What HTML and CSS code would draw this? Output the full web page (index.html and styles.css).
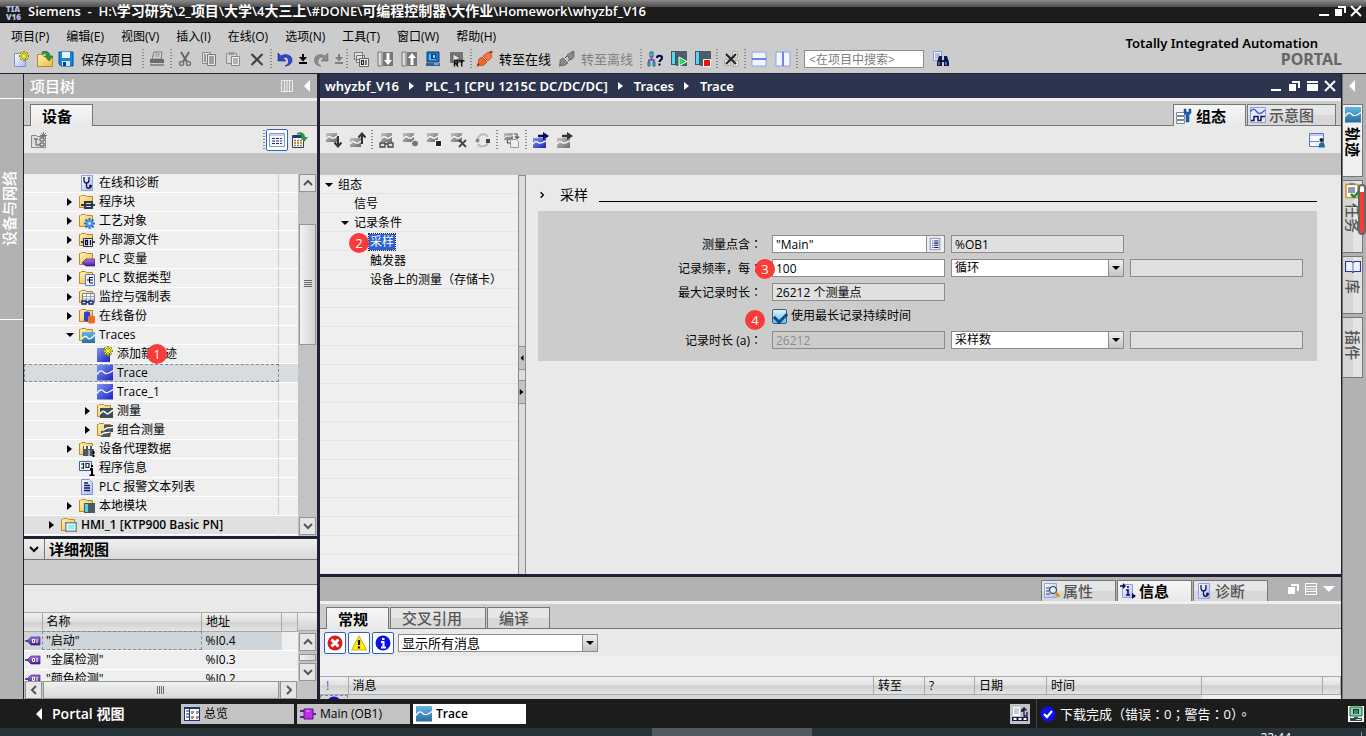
FILE: index.html
```html
<!DOCTYPE html>
<html lang="zh-CN">
<head>
<meta charset="utf-8">
<meta name="viewport" content="width=device-width, initial-scale=1">
<title>Siemens - whyzbf_V16</title>
<link rel="stylesheet" href="styles.css">
</head>
<body>
<svg class="sprite" aria-hidden="true">
  <defs>
    <linearGradient id="gFold" x1="0" y1="0" x2="1" y2="1"><stop offset="0" stop-color="#fff3b8"/><stop offset="1" stop-color="#f0b93c"/></linearGradient>
    <linearGradient id="gBlue" x1="0" y1="0" x2="1" y2="1"><stop offset="0" stop-color="#7f97f5"/><stop offset="1" stop-color="#1c22b8"/></linearGradient>
    <linearGradient id="gSky" x1="0" y1="0" x2="0" y2="1"><stop offset="0" stop-color="#63b6e6"/><stop offset="1" stop-color="#2b6c9c"/></linearGradient>
    <linearGradient id="gDoc" x1="0" y1="0" x2="1" y2="1"><stop offset="0" stop-color="#ffffff"/><stop offset="1" stop-color="#a9b8ee"/></linearGradient>
    <linearGradient id="gGray" x1="0" y1="0" x2="1" y2="1"><stop offset="0" stop-color="#c4c4c4"/><stop offset="1" stop-color="#6c6c6c"/></linearGradient>
    <linearGradient id="gPur" x1="0" y1="0" x2="0" y2="1"><stop offset="0" stop-color="#a47be8"/><stop offset="1" stop-color="#4a1a9c"/></linearGradient>
  </defs>
  <symbol id="folder" viewBox="0 0 16 16"><path d="M.5 13.500V2.500h1l1-1h4l1 1h6v11z" fill="url(#gFold)" stroke="#b98a28"/></symbol>
  <symbol id="star" viewBox="0 0 16 16"><path d="M11 0v10M6 5h10M7.500 1.500l7 7M14.500 1.500l-7 7" stroke="#8b8a00" stroke-width="2"/><path d="M11 1v8M7 5h8M8 2l6 6M14 2l-6 6" stroke="#ffff3c" stroke-width="1"/></symbol>
  <symbol id="new" viewBox="0 0 16 16"><path d="M1.500 2.500h11v13h-11z" fill="url(#gDoc)" stroke="#7d93d8"/><use href="#star"/></symbol>
  <symbol id="open" viewBox="0 0 16 16"><path d="M.5 15.500v-12h5l1 2h9v10z" fill="url(#gFold)" stroke="#b98a28"/><path d="M5 1c5-2 8 1 8 4h3l-4 5-4-5h2c0-2-2-3-5-2z" fill="#2a9a38" stroke="#10661e" stroke-width=".6"/></symbol>
  <symbol id="save" viewBox="0 0 16 16"><path d="M1 1h14v14H3l-2-2z" fill="#1685dc" stroke="#0a4f98"/><path d="M4 1h8v6H4z" fill="#e9f3fb"/><path d="M4 10h8v5H4z" fill="#cfe3f4"/><path d="M5 11h3v4H5z" fill="#0a3e7c"/></symbol>
  <symbol id="print" viewBox="0 0 16 16"><path d="M5 1h8l-1 7H3z" fill="#d9d9d9" stroke="#777"/><path d="M6 3h5M5.500 5h5" stroke="#888"/><path d="M1 8h14v4H1z" fill="#6b6b6b"/><path d="M1 13h14v2H1z" fill="#8f8f8f"/></symbol>
  <symbol id="cut" viewBox="0 0 16 16"><path d="M4 1l6 10M12 1L6 11" stroke="#666" stroke-width="2" fill="none"/><circle cx="4.500" cy="12.500" r="2" fill="none" stroke="#777" stroke-width="1.500"/><circle cx="11.500" cy="12.500" r="2" fill="none" stroke="#777" stroke-width="1.500"/></symbol>
  <symbol id="copy" viewBox="0 0 16 16"><path d="M1.500 1.500h8v11h-8z" fill="#ddd" stroke="#8a8a8a"/><path d="M6.500 3.500h8v11h-8z" fill="#e8e8e8" stroke="#777"/><path d="M8 6h5M8 8h5M8 10h5M8 12h5M3 4h2M3 6h2M3 8h2M3 10h2" stroke="#555"/></symbol>
  <symbol id="paste" viewBox="0 0 16 16"><path d="M1.500 2.500h10v10h-10z" fill="#d6d6d6" stroke="#8e8e8e"/><path d="M4 1h5v3H4z" fill="#999"/><path d="M6.500 5.500h8v9h-8z" fill="#eee" stroke="#888"/><path d="M8 8h5M8 10h5M8 12h5" stroke="#777"/></symbol>
  <symbol id="del" viewBox="0 0 16 16"><path d="M2.500 3l11 11M13.500 3l-11 11" stroke="#3d3d3d" stroke-width="2"/></symbol>
  <symbol id="undo" viewBox="0 0 16 16"><path d="M1 2v8h8L6 7c3-2 7 0 5 6l-3 2c7 0 9-7 5-10-3-2-6-2-9 0z" fill="#2c49d6" stroke="#16237e" stroke-width=".6"/></symbol>
  <symbol id="redo" viewBox="0 0 16 16"><path d="M15 2v8H8l3-3c-3-2-7 0-6 6l3 2C1 15 0 8 3 5c3-2 6-2 9 0z" fill="#8a8a8a" stroke="#707070" stroke-width=".6"/></symbol>
  <symbol id="drop" viewBox="0 0 8 16"><path d="M3 3h2v3h3L4 10.500 0 6h3zM0 11h8v2H0z" fill="currentColor"/></symbol>
  <symbol id="compile" viewBox="0 0 16 16"><path d="M1.500 1.500h8v7h-8zM3.500 4.500h8v7h-8z" fill="#e4e4e4" stroke="#777"/><path d="M6.500 7.500h9v8h-9z" fill="#f3f3f3" stroke="#666"/><path d="M8.500 9.500h2v4h-2zM13 9v5" fill="none" stroke="#222" stroke-width="1.200"/></symbol>
  <symbol id="down" viewBox="0 0 16 16"><path d="M1 1h4v14H1z" fill="#dadada" stroke="#777"/><path d="M6 1h10v14H6z" fill="#777"/><path d="M9.500 2h3v7H15l-4 5-4-5h2.500z" fill="#fff"/></symbol>
  <symbol id="up" viewBox="0 0 16 16"><path d="M1 1h4v14H1z" fill="#dadada" stroke="#777"/><path d="M6 1h10v14H6z" fill="#777"/><path d="M9.500 14h3V7H15l-4-5-4 5h2.500z" fill="#fff"/></symbol>
  <symbol id="pc" viewBox="0 0 16 16"><path d="M2 1h12v10H2z" fill="#1b74c4" stroke="#12386a"/><path d="M4 3h7v6H4z" fill="#46c0f0"/><path d="M6 3h5v5H6z" fill="#0e3b7a"/><path d="M8 4h2v3H8z" fill="#7ce0ff"/><path d="M1 12h14v3H1z" fill="#3a5d90"/><path d="M9 13h5" stroke="#bfe0ff"/></symbol>
  <symbol id="rt" viewBox="0 0 16 16"><path d="M1 1h13v11H1z" fill="#747474"/><path d="M4 3l7 4-7 4z" fill="#ddd" stroke="#444" stroke-width=".6"/><path d="M5.500 15.500v-6h3v3h-3M7 12.500l2 3M10 9.700h5.500M12.700 10v5.500" stroke="#111" stroke-width="1.400" fill="none"/></symbol>
  <symbol id="plug" viewBox="0 0 16 16"><path d="M0 15l3-3M12 3l3-3" stroke="#b33510" stroke-width="2.500"/><path d="M2 8l3-2 5 5-3 3c-2 1-4 1-5-1s-1-4 0-5z" fill="#f0682c" stroke="#b83a10" stroke-width=".7"/><path d="M6 5l4-3c2-1 4 0 4 1 1 2 1 4-1 5l-2 2z" fill="#f47b3c" stroke="#b83a10" stroke-width=".7"/></symbol>
  <symbol id="plugoff" viewBox="0 0 16 16"><path d="M0 15l3-3M12 3l3-3" stroke="#777" stroke-width="2.500"/><path d="M1 9l3-2 5 5-3 2c-2 1-4 1-5-1zM8 4l3-2c2-1 4 0 4 1 0 3 0 4-2 5l-2 1z" fill="#8b8b8b" stroke="#555" stroke-width=".7"/><path d="M6 7l2-2M9 10l2-2" stroke="#444"/></symbol>
  <symbol id="diag" viewBox="0 0 16 16"><path d="M3 1h3v5H3zM1 11h2v4H1zM6 11h2v4H6z" stroke="#1d6d80" fill="#40c8d8"/><path d="M4.500 6v3M2 11V9h5v2" fill="none" stroke="#8c2fb4" stroke-width="1.500"/><path d="M10 7c0-3 5-3 5 0 0 2-2.500 2-2.500 4M12.500 12.500v2" fill="none" stroke="#000040" stroke-width="2"/></symbol>
  <symbol id="start" viewBox="0 0 16 16"><path d="M0 0h5v14H0z" fill="#35576c"/><path d="M1 1h3v12H1z" fill="#56d8e8"/><path d="M5 0h11v15H5z" fill="#4c5c6a"/><path d="M8 6l8 4.500L8 15z" fill="#25d860" stroke="#fff" stroke-width="1"/></symbol>
  <symbol id="stop" viewBox="0 0 16 16"><path d="M0 0h5v14H0z" fill="#35576c"/><path d="M1 1h3v12H1z" fill="#56d8e8"/><path d="M5 0h11v15H5z" fill="#4c5c6a"/><path d="M8.500 8.500h7v7h-7z" fill="#f01010" stroke="#fff"/></symbol>
  <symbol id="xref" viewBox="0 0 16 16"><path d="M9.500.5h5v6h-5zM1.500 8.500h6v6h-6zM10.500 9.500h5v6h-5z" fill="#e8e8e8" stroke="#aaa"/><path d="M3 3l10 10M13 3L3 13" stroke="#222" stroke-width="2"/></symbol>
  <symbol id="splith" viewBox="0 0 16 16"><path d="M1 1h14v14H1z" fill="#f2f4ff" stroke="#8ba0ee"/><path d="M1 8h14" stroke="#4462d8" stroke-width="1.500"/></symbol>
  <symbol id="splitv" viewBox="0 0 16 16"><path d="M1 1h14v14H1z" fill="#f2f4ff" stroke="#8ba0ee"/><path d="M8 1v14" stroke="#4462d8" stroke-width="1.500"/></symbol>
  <symbol id="find" viewBox="0 0 16 16"><path d="M.5.5h8v9h-8z" fill="#eef" stroke="#8c9ad8"/><path d="M2 3h5M2 5h5M2 7h5" stroke="#7c8ccc"/><path d="M6 5h3v4h2V5h3l2 6v4h-5v-4h-2v4H4v-4z" fill="#101850"/><path d="M6 11v3M13 11v3" stroke="#9db4ff"/></symbol>
  <symbol id="wave" viewBox="0 0 16 16"><path d="M0 0h16v15.500H0z" fill="url(#gBlue)"/><path d="M0 9.500c3-5 5-4 7-2s4 2 9-2" fill="none" stroke="#fff" stroke-width="1.300"/></symbol>
  <symbol id="skywave" viewBox="0 0 16 16"><path d="M0 0h16v15.500H0z" fill="url(#gSky)"/><path d="M0 9.500c3-5 5-4 7-2s4 2 9-2" fill="none" stroke="#fff" stroke-width="1.300"/></symbol>
  <symbol id="addtrace" viewBox="0 0 16 16"><path d="M0 2h13v14H0z" fill="url(#gBlue)"/><use href="#star"/></symbol>
  <symbol id="diagdoc" viewBox="0 0 16 16"><path d="M2.500.5h11v15h-11z" fill="url(#gDoc)" stroke="#8fa3e0"/><path d="M5 2v3c0 4 5 4 5 0V2M7.500 8v3c0 3 4 3 4 0" fill="none" stroke="#0d1450" stroke-width="1.300"/><circle cx="11.500" cy="11" r="1.500" fill="#0d1450"/></symbol>
  <symbol id="fblock" viewBox="0 0 16 16"><use href="#folder"/><path d="M2 11h14M6 8h7v6H6z" stroke="#2d3944" stroke-width="2" fill="#cfd6dc"/></symbol>
  <symbol id="fgear" viewBox="0 0 16 16"><use href="#folder"/><path d="M10.500 5v11M5 10.500h11M6.500 6.500l8 8M14.500 6.500l-8 8" stroke="#1f6fe0" stroke-width="2"/><circle cx="10.500" cy="10.500" r="3" fill="#4d9bff"/><circle cx="10.500" cy="10.500" r="1.200" fill="#fff"/></symbol>
  <symbol id="fsrc" viewBox="0 0 16 16"><use href="#folder"/><path d="M2 10h14" stroke="#444" stroke-width="2"/><path d="M4.500 6.500h9v8h-9z" fill="#eef" stroke="#334"/><path d="M6.500 8.500h2v4h-2zM11.500 8v5" fill="none" stroke="#003" stroke-width="1.300"/></symbol>
  <symbol id="ftag" viewBox="0 0 16 16"><use href="#folder"/><path d="M3 12l4-4h9v7H7z" fill="url(#gPur)" stroke="#2f0f6c" stroke-width=".6"/></symbol>
  <symbol id="ftype" viewBox="0 0 16 16"><use href="#folder"/><path d="M6.500 4.500h9v11h-9z" fill="#eef2ff" stroke="#5f79c0"/><path d="M8 10h2M10.500 7v6M11 7.500h3M11 10h3M11 13h3" stroke="#112" fill="none"/></symbol>
  <symbol id="fwatch" viewBox="0 0 16 16"><use href="#folder"/><path d="M3.500 4.500h12v9h-12z" fill="#fff" stroke="#7080a8"/><path d="M4 7.500h11M4 10h11M7.500 5v8M11.500 5v8" stroke="#98a4c4"/><path d="M3 12h4v3H3zM10 12h4v3h-4zM7 13h3" fill="#dfe6ff" stroke="#18225c" stroke-width="1.300"/></symbol>
  <symbol id="fback" viewBox="0 0 16 16"><use href="#folder"/><path d="M5 5c0-2 6-2 6 0v7c0 2-6 2-6 0z" fill="#2840d8"/><path d="M9 9c0-2 7-2 7 0v5c0 2-7 2-7 0z" fill="#f06a20"/></symbol>
  <symbol id="ftrace" viewBox="0 0 16 16"><use href="#folder"/><path d="M3 5h13v11H3z" fill="url(#gSky)"/><path d="M3 12c3-4 4-3 6-1s3 0 7-3" fill="none" stroke="#fff" stroke-width="1.300"/></symbol>
  <symbol id="fmeas" viewBox="0 0 16 16"><use href="#folder"/><path d="M3 5h13v10H3z" fill="#3f4d58"/><path d="M3 11c3-4 4-3 6-1s3 0 7-3" fill="none" stroke="#fff" stroke-width="1.500"/></symbol>
  <symbol id="fcomb" viewBox="0 0 16 16"><use href="#folder"/><path d="M7 3h9v7H7zM4 9h9v6H4z" fill="#4a5863"/><path d="M7 8c3-4 4-1 9-3M4 13c3-4 4-1 9-3" fill="none" stroke="#fff" stroke-width="1.300"/></symbol>
  <symbol id="fproxy" viewBox="0 0 16 16"><use href="#folder"/><path d="M4 5h11v10H4z" fill="#4d5760"/><path d="M5 5h2v3H5zM9 5h2v3H9zM13 5h2v3h-2z" fill="#fff"/><path d="M9 9h2v6H9z" fill="#8fb0c4"/><path d="M14.500 10v3M14.500 14v2" stroke="#000" stroke-width="2"/></symbol>
  <symbol id="proginfo" viewBox="0 0 16 16"><path d="M.5 1.500h12v9H.5z" fill="#f4f8ff" stroke="#3a5f98"/><path d="M2 4h3M2 8h3M4.500 3v6M7 3.500h3v4H7z" fill="none" stroke="#123" stroke-width="1.200"/><path d="M11 9h2v6M10.500 15.500h5M12 6h2" fill="none" stroke="#000" stroke-width="2"/></symbol>
  <symbol id="textdoc" viewBox="0 0 16 16"><path d="M2.500.5h8l3 3v12h-11z" fill="url(#gDoc)" stroke="#7f93da"/><path d="M5 4h4M5 6.500h6M5 9h6M5 11.500h6" stroke="#101860" stroke-width="1.300"/></symbol>
  <symbol id="listdoc" viewBox="0 0 16 16"><path d="M2.500 1.500h11v13h-11z" fill="#f4f6ff" stroke="#6c80c0"/><path d="M5 4.500h1M7 4.500h5M5 7h1M7 7h5M5 9.500h1M7 9.500h5M5 12h1M7 12h5" stroke="#101850" stroke-width="1.200"/></symbol>
  <symbol id="flocal" viewBox="0 0 16 16"><use href="#folder"/><path d="M5 5h11v10H5z" fill="#4d5a66"/><path d="M6 6h3v8H6z" fill="#4ed4e8"/></symbol>
  <symbol id="fhmi" viewBox="0 0 16 16"><use href="#folder"/><path d="M4 5h12v10H4z" fill="#7d8b94"/><path d="M6 7h8v6H6z" fill="#8ff0f4" stroke="#fff"/></symbol>
  <symbol id="tag" viewBox="0 0 16 16"><path d="M0 8h4" stroke="#335" stroke-width="1.500"/><path d="M2 8l4-4h9v8H6z" fill="url(#gPur)" stroke="#2f0f6c" stroke-width=".6"/><path d="M7.500 6.500h2v3h-2zM12 6v4" fill="none" stroke="#fff"/></symbol>
  <symbol id="newdis" viewBox="0 0 16 16"><path d="M.5 15.500v-12h5l1 1h8v11z" fill="#ddd" stroke="#888"/><path d="M3 7h4M5 7v6h4M9 6h4v3H9zM9 11h4v3H9z" fill="none" stroke="#555"/><path d="M12.500 0v7M9 3.500h7M10 1l5 5M15 1l-5 5" stroke="#777"/></symbol>
  <symbol id="table" viewBox="0 0 16 16"><path d="M.5 1.500h15v13H.5z" fill="#f4f6ff" stroke="#8a98c8"/><path d="M1 2h14v2H1z" fill="#c6d0ee"/><path d="M3 6.500h10M3 9h10M3 11.500h10" stroke="#223070" stroke-dasharray="3 1"/></symbol>
  <symbol id="tabexp" viewBox="0 0 16 16"><path d="M.5 3.500h11v12H.5z" fill="#fff" stroke="#223a78"/><path d="M1 4h10v2H1z" fill="#223a78"/><path d="M2 8.500h9M2 11h9M2 13.500h9" stroke="#b06a10" stroke-width="1.500" stroke-dasharray="2 1"/><path d="M5 1c5-2 8 1 8 4h3l-4 5-4-5h2c0-2-2-3-5-2z" fill="#2a9a38"/></symbol>
  <symbol id="tg" viewBox="0 0 16 16"><path d="M0 1h11v9H0z" fill="url(#gGray)"/><path d="M0 7c3-4 4-2 6-1s3-1 5-2" fill="none" stroke="#fff" stroke-width="1.300"/></symbol>
  <symbol id="tdown" viewBox="0 0 16 16"><use href="#tg"/><path d="M12 4v10M8.500 10.500L12 14.500l3.500-4" stroke="#333" stroke-width="2" fill="none"/></symbol>
  <symbol id="tup" viewBox="0 0 16 16"><path d="M0 6h11v9H0z" fill="url(#gGray)"/><path d="M0 12c3-4 4-2 6-1s3-1 5-2" fill="none" stroke="#fff" stroke-width="1.300"/><path d="M12 12V2M8.500 5.500L12 1.500l3.500 4" stroke="#333" stroke-width="2" fill="none"/></symbol>
  <symbol id="tglass" viewBox="0 0 16 16"><use href="#tg" x="2"/><path d="M1 11h5v4H1zM9 11h5v4H9zM6 12h3" fill="#ddd" stroke="#444" stroke-width="1.300"/></symbol>
  <symbol id="trec" viewBox="0 0 16 16"><use href="#tg"/><circle cx="12" cy="11.500" r="3.500" fill="#777" stroke="#eee"/></symbol>
  <symbol id="tstop" viewBox="0 0 16 16"><use href="#tg"/><path d="M8.500 8.500h6v6h-6z" fill="#222" stroke="#fff"/></symbol>
  <symbol id="tdel" viewBox="0 0 16 16"><use href="#tg"/><path d="M8 8l7 7M15 8l-7 7" stroke="#444" stroke-width="1.800"/></symbol>
  <symbol id="tcyc" viewBox="0 0 16 16"><path d="M3 7c1-6 8-6 10-2M13 10c-1 5-8 6-10 2" fill="none" stroke="#bbb" stroke-width="2"/><circle cx="2.500" cy="8.500" r="2" fill="#888"/><path d="M11 7h4v4h-4z" fill="#444"/></symbol>
  <symbol id="tcopy" viewBox="0 0 16 16"><path d="M0 1h9v7H0z" fill="url(#gGray)"/><path d="M0 6c3-4 5 0 9-3" fill="none" stroke="#fff"/><path d="M6.500 7.500h6l2 2v6h-8z" fill="#eee" stroke="#999"/><path d="M3.500 8v3h3M10 2h3v4M11 4.500l2 2 2-2" fill="none" stroke="#555" stroke-width="1.200"/></symbol>
  <symbol id="texp" viewBox="0 0 16 16"><path d="M0 6h13v10H0z" fill="url(#gBlue)"/><path d="M0 12c3-4 4-2 6-1s4-1 7-2" fill="none" stroke="#fff" stroke-width="1.300"/><path d="M5 4h6" stroke="#080850" stroke-width="2.500"/><path d="M10 0l6 4-6 4z" fill="#080850"/></symbol>
  <symbol id="texpg" viewBox="0 0 16 16"><path d="M0 6h13v10H0z" fill="url(#gGray)"/><path d="M0 12c3-4 4-2 6-1s4-1 7-2" fill="none" stroke="#fff" stroke-width="1.300"/><path d="M5 4h6" stroke="#333" stroke-width="2.500"/><path d="M10 0l6 4-6 4z" fill="#333"/></symbol>
  <symbol id="user" viewBox="0 0 16 16"><path d="M.5 1.500h14v13H.5z" fill="#f4f8ff" stroke="#5f79c8"/><path d="M1 2h13v2H1z" fill="#bccaf0"/><path d="M1 9.500h9" stroke="#6c84d0"/><circle cx="12.500" cy="8" r="2" fill="#222"/><path d="M9.500 15.500c0-7 6.500-7 6.500 0z" fill="#1a6ca8"/></symbol>
  <symbol id="config" viewBox="0 0 16 16"><path d="M.5 4.500h8v3h-8zM.5 8.500h8v3h-8zM.5 12.500h8v3h-8z" fill="#fff" stroke="#7a869c"/><path d="M8 1v4l2 2v7h3V7l2-2V1l-2 0v3h-3V1z" fill="#1c63b4" stroke="#0d3c7c" stroke-width=".5"/></symbol>
  <symbol id="chart" viewBox="0 0 16 16"><path d="M.5.5h15v15H.5z" fill="#e6eafc" stroke="#8fa0e0"/><path d="M0 5c3-4 5-3 7 0s5 1 8-2" fill="none" stroke="#4a62d8" stroke-width="1.500"/><path d="M1 13.500h3v-4h4v4h3v-4h4" fill="none" stroke="#101850" stroke-width="1.500"/></symbol>
  <symbol id="props" viewBox="0 0 16 16"><path d="M.5.5h12v14H.5z" fill="url(#gDoc)" stroke="#90a2dc"/><path d="M2 5h4M2 8h3M2 11h4" stroke="#345"/><circle cx="9" cy="7" r="3.500" fill="#dff0ff" stroke="#223"/><path d="M11.500 9.500l4 4" stroke="#e09020" stroke-width="2.500"/></symbol>
  <symbol id="info2" viewBox="0 0 16 16"><path d="M2.500 1.500h10v13h-10z" fill="url(#gDoc)" stroke="#90a2dc"/><path d="M0 3h4M12 13h3" fill="none" stroke="#080c50" stroke-width="1.700"/><path d="M3 0l3 3-3 3zM12 10l4 3-4 3z" fill="#080c50"/><path d="M6 7h2v5M6 12h4M7 4h2" fill="none" stroke="#080c50" stroke-width="1.600"/></symbol>
  <symbol id="task" viewBox="0 0 16 16"><path d="M1 1.500h12v13H1z" fill="#fff" stroke="#d09a28" stroke-width="1.600"/><path d="M4 0h6v2H4z" fill="#888"/><path d="M3 5h7M3 7h7M3 9h7" stroke="#223080"/><path d="M6 11l3 3 6-7" fill="none" stroke="#18902c" stroke-width="2.500"/></symbol>
  <symbol id="book" viewBox="0 0 16 16"><path d="M.5 2.500h6l1.500 1 1.500-1h6v10H9l-1 1-1-1H.5z" fill="#f0f4ff" stroke="#2438a0" stroke-width="1.200"/><path d="M8 3v10" stroke="#5070e0"/></symbol>
  <symbol id="err" viewBox="0 0 16 16"><circle cx="8" cy="8" r="7.500" fill="#e01a1a"/><path d="M4.500 4.500l7 7M11.500 4.500l-7 7" stroke="#fff" stroke-width="3"/></symbol>
  <symbol id="warn" viewBox="0 0 16 16"><path d="M8 .8L15.500 15H.5z" fill="#ffee10" stroke="#c8a000" stroke-width=".8"/><path d="M8 5v5M8 11.500v2" stroke="#111" stroke-width="2.200"/></symbol>
  <symbol id="inf" viewBox="0 0 16 16"><circle cx="8" cy="8" r="7.500" fill="#0c10e8"/><path d="M6 7h2.500v5M6 12.500h5M7 4h2.500" fill="none" stroke="#fff" stroke-width="2"/></symbol>
  <symbol id="ok" viewBox="0 0 16 16"><circle cx="8" cy="8" r="7.500" fill="#0c10f0"/><path d="M4 8l3 3 5-6" fill="none" stroke="#fff" stroke-width="2.200"/></symbol>
  <symbol id="over" viewBox="0 0 16 16"><path d="M0 1h16v14H0z" fill="#14397c"/><path d="M1 3h14v11H1z" fill="#fff"/><path d="M5.500 3v11" stroke="#14397c"/><path d="M2 5h3M2 8h3M2 11h3M7 6h3M12 6h3M7 11h3M12 11h3" stroke="#224"/><path d="M7 7.500h2M12 7.500h2M7 12.500h2M12 12.500h2" stroke="#e08820"/></symbol>
  <symbol id="ob" viewBox="0 0 16 16"><path d="M0 5h4M0 11h4M12 8h4" stroke="#6a1a90" stroke-width="2"/><path d="M4 3h9v10H4z" fill="#c02cf0" stroke="#58127c"/><path d="M6 5h4" stroke="#eaa8ff"/></symbol>
  <symbol id="netup" viewBox="0 0 16 16"><path d="M1 1h7v9H1z" fill="#fff"/><path d="M2 3h5M2 5h5M2 7h5" stroke="#99a"/><path d="M9 5h3v5h3V6M12 2v5M9.500 4.500L12 2l2.500 2.500" fill="none" stroke="#111850" stroke-width="1.300"/><path d="M0 11h16v4H0z" fill="#111850"/><path d="M1.500 13h3M6.500 13h3M11.500 13h3" stroke="#fff" stroke-width="2"/></symbol>
  <symbol id="station" viewBox="0 0 16 16"><path d="M0 0h16v16H0z" fill="#fff"/><path d="M2 1h12v9H2z" fill="#80e0a0" stroke="#1c5c3c"/><path d="M5 3h6v5H5z" fill="#234"/><path d="M7 4v4M9 4v4" stroke="#6cc"/><path d="M6 11h4v1H6z" fill="#1c5c3c"/><path d="M2 12h12v3H2z" fill="#345"/><path d="M8 13.500h5" stroke="#bdd"/></symbol>
  <symbol id="right" viewBox="0 0 8 8"><path d="M1 0l5 4-5 4z" fill="currentColor"/></symbol>
  <symbol id="left" viewBox="0 0 8 12"><path d="M7 0L1 6l6 6z" fill="currentColor"/></symbol>
  <symbol id="dn" viewBox="0 0 8 8"><path d="M0 2h8L4 6z" fill="currentColor"/></symbol>
  <symbol id="chev" viewBox="0 0 12 12"><path d="M2 4l4 4 4-4" fill="none" stroke="currentColor" stroke-width="2"/></symbol>
  <symbol id="wmin" viewBox="0 0 12 12"><path d="M1 9h10v2H1z" fill="currentColor"/></symbol>
  <symbol id="wrest" viewBox="0 0 12 12"><path d="M1 4h7v7H1zM4 1h8v7h-2V3H4z" fill="currentColor"/></symbol>
  <symbol id="wmax" viewBox="0 0 12 12"><path d="M1 1h11v2H1zM1 4h11v7H1z" fill="currentColor"/></symbol>
  <symbol id="wclose" viewBox="0 0 12 12"><path d="M1 1l10 10M11 1L1 11" stroke="currentColor" stroke-width="2"/></symbol>
  <symbol id="wlines" viewBox="0 0 12 12"><path d="M.5.5h11v11H.5zM1 3.500h10M1 6h10M1 8.500h10" fill="none" stroke="currentColor"/></symbol>
</svg>

<header class="titlebar">
  <span class="logo"><b>TIA</b><b>V16</b></span>
  <h1 class="title">Siemens&nbsp; -&nbsp; H:\<span>学习研究</span>\2_<span>项目</span>\<span>大学</span>\4<span>大三上</span>\#DONE\<span>可编程控制器</span>\<span>大作业</span>\Homework\whyzbf_V16</h1>
  <span class="winbtns">
    <button aria-label="最小化"><svg><use href="#wmin"/></svg></button>
    <button aria-label="还原"><svg><use href="#wrest"/></svg></button>
    <button aria-label="关闭"><svg><use href="#wclose"/></svg></button>
  </span>
</header>

<div class="appbar">
  <div class="appbar-main">
    <nav class="menu">
      <a href="#">项目(P)</a><a href="#">编辑(E)</a><a href="#">视图(V)</a><a href="#">插入(I)</a><a href="#">在线(O)</a><a href="#">选项(N)</a><a href="#">工具(T)</a><a href="#">窗口(W)</a><a href="#">帮助(H)</a>
    </nav>
    <div class="tools">
      <button aria-label="新建"><svg><use href="#new"/></svg></button>
      <button aria-label="打开"><svg><use href="#open"/></svg></button>
      <button class="lab keep"><svg><use href="#save"/></svg>保存项目</button>
      <i class="sep"></i>
      <button aria-label="打印"><svg><use href="#print"/></svg></button>
      <i class="sep"></i>
      <button aria-label="剪切"><svg><use href="#cut"/></svg></button>
      <button aria-label="复制"><svg><use href="#copy"/></svg></button>
      <button aria-label="粘贴"><svg><use href="#paste"/></svg></button>
      <button aria-label="删除"><svg><use href="#del"/></svg></button>
      <i class="sep"></i>
      <button aria-label="撤销"><svg><use href="#undo"/></svg></button>
      <button class="mini" aria-label="撤销列表"><svg><use href="#drop"/></svg></button>
      <button aria-label="重做"><svg><use href="#redo"/></svg></button>
      <button class="mini off" aria-label="重做列表"><svg><use href="#drop"/></svg></button>
      <i class="sep"></i>
      <button aria-label="编译"><svg><use href="#compile"/></svg></button>
      <button aria-label="下载"><svg><use href="#down"/></svg></button>
      <button aria-label="上传"><svg><use href="#up"/></svg></button>
      <button aria-label="仿真"><svg><use href="#pc"/></svg></button>
      <button aria-label="运行系统"><svg><use href="#rt"/></svg></button>
      <i class="sep"></i>
      <button class="lab"><svg><use href="#plug"/></svg>转至在线</button>
      <button class="lab off"><svg><use href="#plugoff"/></svg>转至离线</button>
      <i class="sep"></i>
      <button aria-label="可访问设备"><svg><use href="#diag"/></svg></button>
      <button aria-label="启动"><svg><use href="#start"/></svg></button>
      <button aria-label="停止"><svg><use href="#stop"/></svg></button>
      <i class="sep"></i>
      <button aria-label="交叉引用"><svg><use href="#xref"/></svg></button>
      <i class="sep"></i>
      <button aria-label="水平拆分"><svg><use href="#splith"/></svg></button>
      <button aria-label="垂直拆分"><svg><use href="#splitv"/></svg></button>
      <i class="sep"></i>
      <input class="search" type="text" placeholder="&lt;在项目中搜索&gt;" aria-label="在项目中搜索">
      <button aria-label="搜索"><svg><use href="#find"/></svg></button>
    </div>
  </div>
  <div class="brand"><span>Totally Integrated Automation</span><strong>PORTAL</strong></div>
</div>

<main class="work">
  <aside class="rail-left"><div class="rail-top"></div><div class="rail-mid"><button>设备与网络</button></div><div class="rail-rest"></div></aside>

  <section class="project">
    <div class="phead"><h2>项目树</h2><svg class="w12"><use href="#wlines"/></svg><svg class="tri"><use href="#left"/></svg></div>
    <div class="tabs"><button class="tab on">设备</button></div>
    <div class="ptools">
      <button aria-label="新增"><svg><use href="#newdis"/></svg></button>
      <i class="grow"></i><i class="sep"></i>
      <button class="framed" aria-label="详细信息"><svg><use href="#table"/></svg></button>
      <button aria-label="总览"><svg><use href="#tabexp"/></svg></button>
    </div>
    <div class="bar"></div>
    <div class="treewrap">
      <ul class="tree">
        <li class="l2"><i></i><svg><use href="#diagdoc"/></svg>在线和诊断</li>
        <li class="l2"><i><svg><use href="#right"/></svg></i><svg><use href="#fblock"/></svg>程序块</li>
        <li class="l2"><i><svg><use href="#right"/></svg></i><svg><use href="#fgear"/></svg>工艺对象</li>
        <li class="l2"><i><svg><use href="#right"/></svg></i><svg><use href="#fsrc"/></svg>外部源文件</li>
        <li class="l2"><i><svg><use href="#right"/></svg></i><svg><use href="#ftag"/></svg>PLC 变量</li>
        <li class="l2"><i><svg><use href="#right"/></svg></i><svg><use href="#ftype"/></svg>PLC 数据类型</li>
        <li class="l2"><i><svg><use href="#right"/></svg></i><svg><use href="#fwatch"/></svg>监控与强制表</li>
        <li class="l2"><i><svg><use href="#right"/></svg></i><svg><use href="#fback"/></svg>在线备份</li>
        <li class="l2"><i><svg><use href="#dn"/></svg></i><svg><use href="#ftrace"/></svg>Traces</li>
        <li class="l3"><i></i><svg><use href="#addtrace"/></svg>添加新轨迹<b class="note n1">1</b></li>
        <li class="l3 sel"><i></i><svg><use href="#wave"/></svg>Trace</li>
        <li class="l3"><i></i><svg><use href="#wave"/></svg>Trace_1</li>
        <li class="l3"><i><svg><use href="#right"/></svg></i><svg><use href="#fmeas"/></svg>测量</li>
        <li class="l3"><i><svg><use href="#right"/></svg></i><svg><use href="#fcomb"/></svg>组合测量</li>
        <li class="l2"><i><svg><use href="#right"/></svg></i><svg><use href="#fproxy"/></svg>设备代理数据</li>
        <li class="l2"><i></i><svg><use href="#proginfo"/></svg>程序信息</li>
        <li class="l2"><i></i><svg><use href="#textdoc"/></svg>PLC 报警文本列表</li>
        <li class="l2"><i><svg><use href="#right"/></svg></i><svg><use href="#flocal"/></svg>本地模块</li>
        <li class="l1"><i><svg><use href="#right"/></svg></i><svg><use href="#fhmi"/></svg>HMI_1 [KTP900 Basic PN]</li>
      </ul>
      <div class="vscroll">
        <button class="flip" aria-label="向上"><svg><use href="#chev"/></svg></button>
        <i class="before"></i><span class="thumb"><i class="grip"></i></span><i class="after"></i>
        <button aria-label="向下"><svg><use href="#chev"/></svg></button>
      </div>
    </div>
    <div class="dhead"><button aria-label="折叠"><svg><use href="#chev"/></svg></button><h2>详细视图</h2></div>
    <div class="dtabs"></div>
    <div class="dtools"></div>
    <div class="detail">
      <div class="dtable">
        <table>
          <colgroup><col class="c18"><col><col class="c80"><col class="c16"></colgroup>
          <thead><tr><th></th><th>名称</th><th>地址</th><th></th></tr></thead>
          <tbody>
            <tr class="sel"><td><svg><use href="#tag"/></svg></td><td>"启动"</td><td>%I0.4</td><td></td></tr>
            <tr><td><svg><use href="#tag"/></svg></td><td>"金属检测"</td><td>%I0.3</td><td></td></tr>
            <tr><td><svg><use href="#tag"/></svg></td><td>"颜色检测"</td><td>%I0.2</td><td></td></tr>
          </tbody>
        </table>
      </div>
      <div class="vscroll small">
        <i class="th"></i>
        <button class="flip" aria-label="向上"><svg><use href="#chev"/></svg></button>
        <span class="thumb"></span>
        <button aria-label="向下"><svg><use href="#chev"/></svg></button>
      </div>
      <div class="hscroll">
        <button class="toleft" aria-label="向左"><svg><use href="#chev"/></svg></button>
        <span class="thumb"><i class="grip"></i></span>
        <button class="toright" aria-label="向右"><svg><use href="#chev"/></svg></button>
      </div>
      <i class="corner"></i>
    </div>
  </section>

  <section class="editor">
    <div class="ehead">
      <nav class="crumbs"><a href="#">whyzbf_V16</a><svg><use href="#right"/></svg><a href="#">PLC_1 [CPU 1215C DC/DC/DC]</a><svg><use href="#right"/></svg><a href="#">Traces</a><svg><use href="#right"/></svg><a href="#">Trace</a></nav>
      <span class="winbtns">
        <button aria-label="最小化"><svg><use href="#wmin"/></svg></button>
        <button aria-label="还原"><svg><use href="#wrest"/></svg></button>
        <button aria-label="最大化"><svg><use href="#wmax"/></svg></button>
        <button aria-label="关闭"><svg><use href="#wclose"/></svg></button>
      </span>
    </div>
    <div class="tabs right">
      <button class="tab on"><svg><use href="#config"/></svg>组态</button>
      <button class="tab wide"><svg><use href="#chart"/></svg>示意图</button>
    </div>
    <div class="ptools etools">
      <button aria-label="下载轨迹"><svg><use href="#tdown"/></svg></button>
      <button aria-label="上传轨迹"><svg><use href="#tup"/></svg></button>
      <i class="sep"></i>
      <button aria-label="观察"><svg><use href="#tglass"/></svg></button>
      <button aria-label="激活记录"><svg><use href="#trec"/></svg></button>
      <button aria-label="停止记录"><svg><use href="#tstop"/></svg></button>
      <button aria-label="删除轨迹"><svg><use href="#tdel"/></svg></button>
      <button aria-label="自动重复"><svg><use href="#tcyc"/></svg></button>
      <i class="sep"></i>
      <button aria-label="传送"><svg><use href="#tcopy"/></svg></button>
      <i class="sep"></i>
      <button aria-label="导出"><svg><use href="#texp"/></svg></button>
      <button aria-label="导出测量"><svg><use href="#texpg"/></svg></button>
      <i class="grow"></i>
      <button aria-label="保存窗口设置"><svg><use href="#user"/></svg></button>
    </div>
    <div class="bar ebar"></div>
    <div class="cfg">
      <ul class="ctree">
        <li><i><svg><use href="#dn"/></svg></i>组态</li>
        <li class="k1"><i></i>信号</li>
        <li class="k1"><i><svg><use href="#dn"/></svg></i>记录条件</li>
        <li class="k2"><i></i><span class="picked">采样</span><b class="note n2">2</b></li>
        <li class="k2"><i></i>触发器</li>
        <li class="k2"><i></i>设备上的测量（存储卡）</li>
      </ul>
      <div class="splitter"><button aria-label="向左折叠"><svg><use href="#left"/></svg></button><button aria-label="向右折叠"><svg><use href="#right"/></svg></button></div>
      <form class="pane">
        <div class="ptitle"><svg><use href="#chev"/></svg><h3>采样</h3><hr></div>
        <div class="fields">
          <label for="f1">测量点含<span class="tc" lang="zh-TW">：</span></label>
          <span class="pick"><input id="f1" type="text" value='"Main"'><button type="button" aria-label="选择块"><svg><use href="#listdoc"/></svg></button></span>
          <input type="text" value="%OB1" readonly aria-label="块地址">
          <i></i>
          <label for="f2">记录频率，每<span class="tc" lang="zh-TW">：</span><b class="note n3">3</b></label>
          <input id="f2" type="text" value="100">
          <span class="combo"><select aria-label="频率单位"><option>循环</option></select><svg><use href="#dn"/></svg></span>
          <input type="text" readonly aria-label="频率结果">
          <label for="f3">最大记录时长<span class="tc" lang="zh-TW">：</span></label>
          <input id="f3" type="text" value="26212 个测量点" readonly>
          <i></i><i></i>
          <span class="holder"><b class="note n4">4</b></span>
          <label class="check"><input type="checkbox" checked>使用最长记录持续时间</label>
          <label for="f5">记录时长 (a)<span class="tc" lang="zh-TW">：</span></label>
          <input id="f5" type="text" value="26212" disabled>
          <span class="combo"><select aria-label="时长单位"><option>采样数</option></select><svg><use href="#dn"/></svg></span>
          <input type="text" readonly aria-label="时长结果">
        </div>
      </form>
    </div>

    <div class="ihead">
      <button class="tab"><svg><use href="#props"/></svg>属性</button>
      <button class="tab on"><svg><use href="#info2"/></svg>信息</button>
      <button class="tab"><svg><use href="#diagdoc"/></svg>诊断</button>
      <span class="winbtns"><button aria-label="浮动"><svg><use href="#wrest"/></svg></button><button aria-label="列表"><svg><use href="#wlines"/></svg></button><button aria-label="收起"><svg><use href="#dn"/></svg></button></span>
    </div>
    <div class="tabs low">
      <button class="tab on">常规</button><button class="tab long">交叉引用</button><button class="tab">编译</button>
    </div>
    <div class="filter">
      <button aria-label="错误"><svg><use href="#err"/></svg></button>
      <button aria-label="警告"><svg><use href="#warn"/></svg></button>
      <button aria-label="信息"><svg><use href="#inf"/></svg></button>
      <span class="combo"><select aria-label="消息筛选"><option>显示所有消息</option></select><svg><use href="#dn"/></svg></span>
    </div>
    <div class="msgs">
      <table>
        <colgroup><col class="c28"><col><col class="c51"><col class="c50"><col class="c72"><col class="c155"><col class="c121"><col class="c18"></colgroup>
        <thead><tr><th class="mark">!</th><th>消息</th><th>转至</th><th>?</th><th>日期</th><th>时间</th><th></th><th></th></tr></thead>
        <tbody><tr><td><svg><use href="#inf"/></svg></td><td></td><td></td><td></td><td></td><td></td><td></td><td></td></tr></tbody>
      </table>
    </div>
  </section>

  <aside class="rail-right">
    <div class="rhead"><svg><use href="#left"/></svg></div>
    <button class="on"><svg><use href="#skywave"/></svg>轨迹</button>
    <button><svg><use href="#task"/></svg>任务<i class="pill"></i></button>
    <button class="short"><svg><use href="#book"/></svg>库</button>
    <button class="plain">插件</button>
  </aside>
</main>

<footer class="taskbar">
  <a class="portal" href="#"><svg><use href="#left"/></svg>Portal 视图</a>
  <button><svg><use href="#over"/></svg>总览</button>
  <button><svg><use href="#ob"/></svg>Main (OB1)</button>
  <button class="on"><svg><use href="#skywave"/></svg>Trace</button>
  <i class="grow"></i>
  <button class="net" aria-label="连接"><svg><use href="#netup"/></svg></button>
  <p class="status"><svg><use href="#ok"/></svg><span>下载完成（错误<span class="tc" lang="zh-TW">：</span>0<span class="tc" lang="zh-TW">；</span>警告<span class="tc" lang="zh-TW">：</span>0）<span class="tc" lang="zh-TW">。</span></span><svg class="station"><use href="#station"/></svg></p>
</footer>
<div class="desktop"><i class="active"></i><span class="clock">22:44</span></div>
</body>
</html>
```
FILE: styles.css
```css
* { box-sizing: border-box; }
body {
  margin: 0;
  height: 100vh;
  display: flex;
  flex-direction: column;
  overflow: hidden;
  font: 12px/16px "Open Sans", "Noto Sans CJK SC", sans-serif;
  color: #000;
  background: #1c1c1c;
}
h1, h2, h3, p, ul { margin: 0; padding: 0; font-size: inherit; list-style: none; }
i { font-style: normal; }
a { color: inherit; text-decoration: none; }
button { margin: 0; padding: 0; border: 0; background: none; font: inherit; color: inherit; }
input, select { font: inherit; color: inherit; margin: 0; border-radius: 0; }
svg { width: 16px; height: 16px; flex: none; display: block; }
.sprite { position: absolute; width: 0; height: 0; }
.grow { flex: 1; }
.tc { font-family: "Noto Sans CJK TC", sans-serif; }

/* title bar */
.titlebar {
  height: 23px;
  flex: none;
  display: flex;
  align-items: center;
  padding: 0 4px 0 6px;
  color: #fff;
  background: linear-gradient(#8a8a8a, #4c4c4c 7px, #1c1c1c 7px);
  border-bottom: 1px solid #000;
}
.logo { display: flex; flex-direction: column; width: 22px; padding-top: 4px; font: 700 8px/8px "Noto Sans", sans-serif; color: #b4c2e4; }
.title { flex: 1; font-size: 13px; font-weight: 600; white-space: nowrap; }
.title span { font-size: 14px; }
.winbtns { display: flex; align-items: center; gap: 4px; }
.winbtns svg { width: 12px; height: 12px; }

/* menu and toolbar */
.appbar { height: 51px; flex: none; display: flex; justify-content: space-between; background: #ccc; border-bottom: 1px solid #1c2233; }
.menu { display: flex; gap: 17px; padding: 6px 11px 0; }
.tools { display: flex; align-items: center; height: 28px; padding-left: 9px; }
.tools button { width: 24px; height: 24px; display: flex; align-items: center; justify-content: center; flex: none; }
.tools .lab { width: auto; gap: 6px; font-size: 13px; padding: 0 4px; white-space: nowrap; }
.tools .keep { gap: 7px; padding: 0 8px 0 1px; }
.tools .off { color: #808080; }
.tools .lab.off { padding-right: 6px; }
.tools .mini { width: 12px; }
.tools .mini svg { width: 8px; }
.sep { width: 4px; height: 22px; flex: none; background: radial-gradient(circle, #888 0 1px, transparent 1px) 0 0 / 4px 3px; }
.search { width: 120px; height: 18px; margin: 0 5px; padding: 0 4px; border: 1px solid #8c8c8c; background: #fff; }
.search::placeholder { color: #7c7c7c; opacity: 1; }
.brand { display: flex; flex-direction: column; align-items: flex-end; padding: 12px 24px 0 0; font: 600 13px/17px "Noto Sans", sans-serif; }
.brand span { padding-right: 24px; }
.brand strong { color: #666; font-size: 16px; font-weight: 700; line-height: 14px; }

/* work area */
.work { flex: 1; min-height: 0; display: grid; grid-template: minmax(0, 1fr) / 24px 296px minmax(0, 1fr) 24px; }
.rail-left { display: flex; flex-direction: column; background: #b2b2b2; border-right: 1px solid #1c2233; }
.rail-top { height: 24px; }
.rail-mid { height: 222px; border: solid #fff; border-width: 1px 0; display: flex; align-items: center; justify-content: center; padding-right: 4px; }
.rail-mid button { writing-mode: vertical-rl; text-orientation: sideways; transform: rotate(180deg); color: #fff; font-size: 15px; line-height: 19px; font-weight: 500; }
.project { display: flex; flex-direction: column; min-width: 0; background: #e9e9e9; border-right: 3px solid #1c2233; }
.phead { height: 24px; flex: none; display: flex; align-items: center; gap: 10px; padding: 0 6px; background: #b2b2b2; color: #fff; }
.phead h2 { flex: 1; font-size: 15px; font-weight: 500; }
.w12 { width: 12px; height: 12px; transform: rotate(90deg); color: #f0f0f0; }
.tri { width: 8px; height: 12px; }

.tabs { height: 28px; flex: none; display: flex; align-items: flex-end; padding-left: 6px; border-top: 3px solid #efefef; background: #ccc; box-shadow: inset 0 -1px #777; }
.tabs.right { justify-content: flex-end; padding-right: 5px; gap: 1px; }
.tab { height: 22px; width: 63px; display: flex; align-items: center; justify-content: flex-start; padding: 0 4px 0 11px; font-size: 15px; font-weight: 500; color: #555; background: linear-gradient(#e6e6e6 50%, #d8d8d8 50%); border: 1px solid #777; }
.tab.on { color: #000; font-weight: 600; background: linear-gradient(#f6f6f6, #e9e9e9); border-bottom: 0; }
.tabs.right .tab { width: 73px; padding: 0 2px; gap: 4px; }
.tabs.right .wide { width: 89px; gap: 3px; }
.ptools { height: 27px; flex: none; display: flex; align-items: center; padding: 0 5px 0 3px; background: #e9e9e9; }
.ptools button { width: 24px; height: 24px; display: flex; align-items: center; justify-content: center; }
.ptools .framed { width: 22px; height: 22px; border: 1px solid #2e62c8; border-radius: 2px; background: #fff; }
.bar { height: 21px; flex: none; background: #c3c3c3; }
.ebar { height: 22px; }

.treewrap { flex: none; display: flex; height: 362px; background: #efefef; }
.tree { flex: 1; min-width: 0; background: linear-gradient(#ccc, #ccc) 254px 0 / 1px 100% no-repeat; }
.tree li { position: relative; height: 19px; display: flex; align-items: center; border-bottom: 1px solid #fff; white-space: nowrap; }
.tree li > svg { margin-right: 4px; }
.tree li > i { width: 18px; flex: none; padding-left: 5px; }
.tree i svg, .ctree i svg { width: 8px; height: 8px; }
.l1 { padding-left: 19px; font-weight: 600; background: #e0e0e0; }
.l2 { padding-left: 37px; }
.l3 { padding-left: 55px; }
.tree .sel { background: #d7dce0; }
.sel::before { content: ""; position: absolute; inset: 0 19px 0 0; border: 1px dashed #888; }
.note { position: absolute; z-index: 2; width: 20px; height: 20px; border-radius: 10px; background: #fb3a3a; color: #fff; font: 13px/20px "Open Sans", sans-serif; text-align: center; }
.n1 { left: 123px; top: -1px; }
.n2 { left: 29px; top: 1px; }
.n3 { right: -9px; top: 0; }
.n4 { right: 1px; top: 3px; }

.vscroll { width: 19px; flex: none; display: flex; flex-direction: column; padding: 0 1px 1px; background: #c3c3c3; }
.vscroll button, .hscroll button { width: 17px; height: 18px; flex: none; display: flex; align-items: center; justify-content: center; background: #e6e6e6; border: 1px solid #949494; color: #555; }
.vscroll button svg, .hscroll button svg { width: 12px; height: 12px; }
.flip svg { transform: rotate(180deg); }
.toleft svg { transform: rotate(90deg); }
.toright svg { transform: rotate(-90deg); }
.thumb { display: flex; align-items: center; justify-content: center; background: linear-gradient(90deg, #f2f2f2, #d4d4d4); border: 1px solid #949494; }
.before { flex: 32; }
.vscroll .thumb { flex: 120; }
.after { flex: 174; }
.grip { width: 8px; height: 8px; background: repeating-linear-gradient(#666 0 1px, transparent 1px 2px); }

.dhead { height: 24px; flex: none; display: flex; align-items: center; border-top: 3px solid #1c2233; border-bottom: 1px solid #777; background: linear-gradient(#f0f0f0, #d8d8d8); }
.dhead button { width: 21px; height: 20px; padding-left: 4px; display: flex; align-items: center; border-right: 1px solid #777; }
.dhead svg { width: 12px; height: 12px; }
.dhead h2 { padding-left: 4px; font-size: 15px; }
.dtabs { height: 25px; flex: none; background: #ccc; border-bottom: 1px solid #777; }
.dtools { height: 27px; flex: none; }
.detail { flex: 1; min-height: 0; display: grid; grid-template: minmax(0, 1fr) 18px / minmax(0, 1fr) 19px; background: #efefef; border-top: 1px solid #aaa; }
.dtable { overflow: hidden; }
table { width: 100%; border-collapse: collapse; table-layout: fixed; }
th { height: 18px; padding: 0 4px; text-align: left; font-weight: 400; line-height: 16px; border-right: 1px solid #aaa; border-bottom: 1px solid #aaa; background: linear-gradient(#f0f0f0, #dedede 50%, #d0d0d0 50%, #e4e4e4); white-space: nowrap; }
.dtable td { height: 19px; padding: 0 4px; line-height: 16px; border-bottom: 1px solid #fff; white-space: nowrap; }
.dtable td:first-child { padding: 0 1px; }
.dtable .sel::before { content: none; }
.dtable .sel td:not(:last-child) { background: #d0d5d9; }
.dtable .sel td:nth-child(2) { outline: 1px dashed #888; outline-offset: -1px; }
.c16 { width: 16px; } .c18 { width: 18px; } .c28 { width: 28px; } .c50 { width: 50px; } .c51 { width: 51px; }
.c72 { width: 72px; } .c80 { width: 80px; } .c121 { width: 121px; } .c155 { width: 155px; }
.small { justify-content: space-between; padding-bottom: 0; }
.small .th { height: 18px; margin: 0 -1px; background: linear-gradient(#f0f0f0, #d4d4d4); border-bottom: 1px solid #aaa; }
.small .thumb { flex: none; height: 7px; }
.hscroll { display: flex; gap: 1px; padding: 0 1px; background: #c3c3c3; }
.hscroll .thumb { flex: 1; background: linear-gradient(#f0f0f0, #d8d8d8); }
.hscroll .grip { background: repeating-linear-gradient(90deg, #666 0 1px, transparent 1px 2px); }
.corner { background: #c3c3c3; }

/* editor */
.editor { display: flex; flex-direction: column; min-width: 0; background: #e9e9e9; border-right: 1px solid #1c2233; }
.ehead { height: 24px; flex: none; display: flex; align-items: center; justify-content: space-between; padding: 0 5px; background: #2d344d; color: #fff; }
.ehead .winbtns { gap: 6px; }
.crumbs { display: flex; align-items: center; gap: 9px; font: 600 13px/16px "Noto Sans", sans-serif; white-space: nowrap; }
.crumbs svg { width: 8px; height: 8px; }
.etools { padding: 0 12px 0 2px; }
.etools .sep { width: 5px; }
.cfg { flex: 1; min-height: 0; display: grid; grid-template-columns: 198px 8px minmax(0, 1fr); }
.ctree { background: repeating-linear-gradient(#efefef 0 18px, #e4e4e4 18px 19px); }
.ctree li { position: relative; height: 19px; display: flex; align-items: center; padding-left: 2px; white-space: nowrap; }
.ctree li > i { width: 16px; flex: none; padding-left: 3px; }
.ctree .k1 { padding-left: 18px; }
.ctree .k2 { padding-left: 34px; }
.picked { margin-left: -1px; padding: 0 1px; color: #fff; background: #2c62d6; outline: 1px dotted #222; }
.splitter { display: flex; flex-direction: column; justify-content: center; gap: 10px; background: #dcdcdc; border: solid #8c8c8c; border-width: 1px 1px 0; }
.splitter button { height: 24px; border: solid #8c8c8c; border-width: 1px 0; background: #c3c3c3; }
.splitter svg { width: 6px; height: 6px; }
.pane { padding: 12px 24px 0 12px; }
.ptitle { display: flex; align-items: center; height: 16px; margin-bottom: 8px; }
.ptitle svg { width: 8px; height: 8px; transform: rotate(-90deg); }
.ptitle h3 { padding: 0 11px 0 14px; font-size: 14px; font-weight: 400; }
.ptitle hr { flex: 1; margin: 13px 0 0; border: 0; border-top: 1px solid #000; }
.fields { display: grid; grid-template-columns: 228px repeat(3, minmax(0, 1fr)); grid-auto-rows: 18px; gap: 6px; padding: 24px 14px 12px 0; background: #ccc; }
.fields > label, .holder { position: relative; padding-right: 4px; text-align: right; white-space: nowrap; line-height: 18px; }
.fields input[type="text"], .combo select { width: 100%; height: 18px; padding: 0 3px; background: #fff; border: 1px solid #8c8c8c; }
.fields input[readonly] { background: #e0e0e0; }
.fields input:disabled { background: #ccc; color: #8c8c8c; }
.pick { display: flex; }
.pick button { width: 18px; flex: none; padding-left: 1px; background: #eee; border: 1px solid #8c8c8c; border-left: 0; }
.pick button svg { width: 14px; height: 14px; }
.combo { position: relative; display: block; }
.combo select { appearance: none; }
.combo svg { position: absolute; right: 0; top: 0; width: 16px; height: 18px; padding: 4px 3px; border: 1px solid #8c8c8c; background: linear-gradient(#f0f0f0, #c4c4c4); pointer-events: none; }
.fields > .check { grid-column: span 3; display: flex; align-items: center; gap: 4px; padding: 0; }
.check input { appearance: none; width: 15px; height: 15px; border: 1px solid #3c5c78; border-radius: 2px; background: linear-gradient(#dff2f8, #58c8e8); }
.check input:checked::before { content: ""; display: block; width: 10px; height: 6px; margin: 2px 1px; border: solid #104a90; border-width: 0 0 3px 3px; transform: rotate(-45deg); }

/* inspector */
.ihead { height: 27px; flex: none; display: flex; align-items: flex-end; justify-content: flex-end; gap: 1px; padding-right: 6px; background: #b2b2b2; border-top: 3px solid #1c2233; }
.ihead .tab { width: 75px; height: 21px; padding: 0 2px; gap: 3px; border-bottom: 0; }
.ihead .winbtns { height: 24px; gap: 6px; padding-left: 18px; color: #fff; }
.low .tab { margin-right: 1px; }
.low .long { width: 96px; }
.filter { height: 27px; flex: none; display: flex; align-items: center; gap: 2px; padding-left: 4px; }
.filter button { width: 22px; height: 22px; display: flex; align-items: center; justify-content: center; border: 1px solid #2e62c8; border-radius: 2px; background: #fff; }
.filter .combo { width: 200px; margin-left: 2px; }
.filter select { font-size: 13px; }
.msgs { height: 43px; flex: none; overflow: hidden; padding-top: 20px; background: #efefef; }
.msgs th { border-top: 1px solid #aaa; }
.msgs .mark { color: #2a6cb8; text-indent: 2px; }
.msgs td { height: 19px; padding: 0 6px; background: #d3d9dd; }
.msgs td:nth-child(n + 7) { background: #efefef; }
.msgs td:first-child { outline: 1px dashed #888; outline-offset: -1px; }

/* right rail */
.rail-right { display: flex; flex-direction: column; align-items: flex-start; gap: 3px; background: #b2b2b2; border-left: 1px solid #777; }
.rhead { height: 27px; padding: 6px 5px; color: #fff; }
.rhead svg { width: 8px; height: 12px; }
.rail-right button { position: relative; width: 20px; height: 73px; display: flex; align-items: center; gap: 4px; padding-top: 2px; writing-mode: vertical-rl; text-orientation: sideways; font-size: 15px; line-height: 18px; font-weight: 500; border: 1px solid #777; border-left: 0; background: linear-gradient(90deg, #d6d6d6 50%, #e4e4e4 50%); color: #555; }
.rail-right .on { background: #f0f0f0; color: #000; font-weight: 600; }
.rail-right .short { height: 58px; }
.rail-right .plain { height: 61px; padding-top: 12px; }
.pill { position: absolute; left: 15px; top: 3px; width: 8px; height: 51px; border: 2px solid #666; border-radius: 4px; background: linear-gradient(#fff 6px, #fb3a3a 6px); }

/* task bar */
.taskbar { height: 29px; flex: none; display: flex; align-items: center; gap: 3px; background: #1c1c1c; color: #fff; }
.portal { width: 178px; display: flex; align-items: center; gap: 9px; padding-left: 35px; font-size: 14px; font-weight: 600; }
.portal svg { width: 8px; height: 12px; }
.taskbar button { width: 113px; height: 20px; display: flex; align-items: center; gap: 4px; padding: 0 3px; background: #c3c3c3; color: #000; }
.taskbar .on { background: #fff; font-weight: 600; }
.taskbar .net { width: 20px; padding: 0 2px; }
.status { height: 29px; width: 330px; margin-left: 3px; display: flex; align-items: center; gap: 4px; padding: 0 2px 0 3px; font-size: 13px; border-left: 1px solid #444; white-space: nowrap; }
.station { margin-left: auto; }
.desktop { position: relative; height: 8px; flex: none; overflow: hidden; display: flex; justify-content: flex-end; background: #27333b; color: #fff; }
.active { position: absolute; left: 652px; width: 160px; height: 8px; background: #525b62; }
.clock { margin: 4px 4px 0 0; padding-right: 70px; line-height: 12px; border-right: 1px solid #8a9298; }
```
